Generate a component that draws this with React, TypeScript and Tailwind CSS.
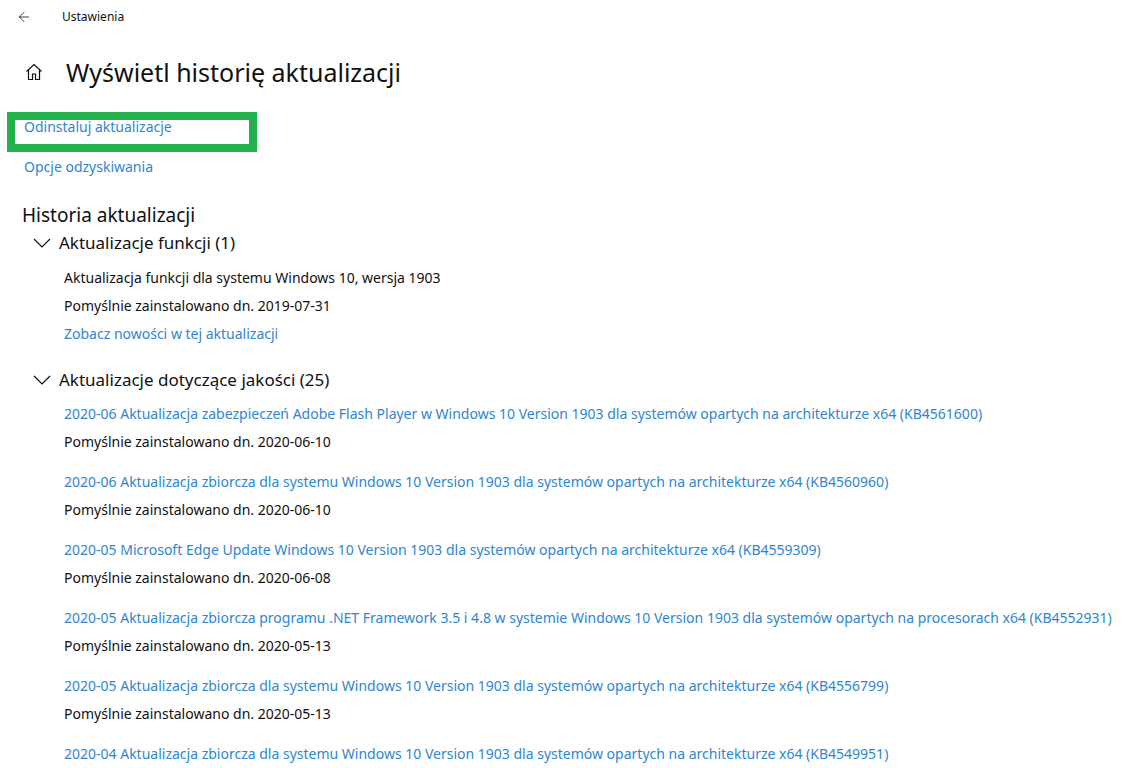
import { ArrowLeft } from "lucide-react";

const font = { fontFamily: '"Noto Sans", "Open Sans", sans-serif' };

const quality = [
  {
    title:
      "2020-06 Aktualizacja zabezpieczeń Adobe Flash Player w Windows 10 Version 1903 dla systemów opartych na architekturze x64 (KB4561600)",
    date: "2020-06-10",
  },
  {
    title:
      "2020-06 Aktualizacja zbiorcza dla systemu Windows 10 Version 1903 dla systemów opartych na architekturze x64 (KB4560960)",
    date: "2020-06-10",
  },
  {
    title:
      "2020-05 Microsoft Edge Update Windows 10 Version 1903 dla systemów opartych na architekturze x64 (KB4559309)",
    date: "2020-06-08",
  },
  {
    title:
      "2020-05 Aktualizacja zbiorcza programu .NET Framework 3.5 i 4.8 w systemie Windows 10 Version 1903 dla systemów opartych na procesorach x64 (KB4552931)",
    date: "2020-05-13",
  },
  {
    title:
      "2020-05 Aktualizacja zbiorcza dla systemu Windows 10 Version 1903 dla systemów opartych na architekturze x64 (KB4556799)",
    date: "2020-05-13",
  },
  {
    title:
      "2020-04 Aktualizacja zbiorcza dla systemu Windows 10 Version 1903 dla systemów opartych na architekturze x64 (KB4549951)",
    date: "",
  },
];

const HomeIcon = () => (
  <svg width="18" height="18" viewBox="0 0 18 18" fill="none" stroke="#111" strokeWidth="1.2">
    <path d="M1.5 8.5 L9 1.5 L16.5 8.5" />
    <path d="M3.5 7 V16.5 H7.5 V11 H10.5 V16.5 H14.5 V7" />
  </svg>
);

const Chevron = () => (
  <svg width="18" height="10" viewBox="0 0 18 10" fill="none" stroke="#111" strokeWidth="1.2">
    <path d="M1 1 L9 9 L17 1" />
  </svg>
);

export default function App() {
  return (
    <div className="w-[1142px] h-[768px] overflow-hidden bg-white text-[#111]" style={font}>
      <div className="flex items-center h-[34px] pl-[16px]">
        <ArrowLeft size={16} strokeWidth={1.2} />
        <span className="ml-[30px] text-[12px]">Ustawienia</span>
      </div>

      <div className="flex items-center h-[78px] pl-[25px] pb-[2px]">
        <HomeIcon />
        <h1 className="ml-[23px] text-[25px] leading-none">Wyświetl historię aktualizacji</h1>
      </div>

      <div className="ml-[7px] w-[250px] h-[40px] border-[8px] border-[#22b14c] pl-[9px]">
        <div className="text-[14px] leading-[14px] text-[#2e86d1]">Odinstaluj aktualizacje</div>
      </div>

      <div className="pl-[24px] h-[30px] pt-[4px] text-[14px] text-[#2e86d1]">Opcje odzyskiwania</div>

      <div className="pl-[22px] pt-[20px] text-[19px] leading-[26px]">Historia aktualizacji</div>

      <div className="flex items-center h-[30px] pl-[33px]">
        <Chevron />
        <span className="ml-[8px] text-[17px]">Aktualizacje funkcji (1)</span>
      </div>

      <div className="pl-[64px] pt-[6px] text-[14px] flex flex-col">
        <div className="h-[28px] leading-[28px]">Aktualizacja funkcji dla systemu Windows 10, wersja 1903</div>
        <div className="h-[28px] leading-[28px]">Pomyślnie zainstalowano dn. 2019-07-31</div>
        <div className="h-[28px] leading-[28px] text-[#2e86d1]">Zobacz nowości w tej aktualizacji</div>
      </div>

      <div className="flex items-center h-[30px] pl-[33px] mt-[17px]">
        <Chevron />
        <span className="ml-[8px] text-[17px]">Aktualizacje dotyczące jakości (25)</span>
      </div>

      <div className="pl-[64px] pt-[5px] text-[14px] flex flex-col gap-[12px]">
        {quality.map((q) => (
          <div key={q.title} className="flex flex-col">
            <div className="h-[28px] leading-[28px] text-[#2e86d1] whitespace-nowrap">{q.title}</div>
            {q.date && <div className="h-[28px] leading-[28px]">Pomyślnie zainstalowano dn. {q.date}</div>}
          </div>
        ))}
      </div>
    </div>
  );
}
